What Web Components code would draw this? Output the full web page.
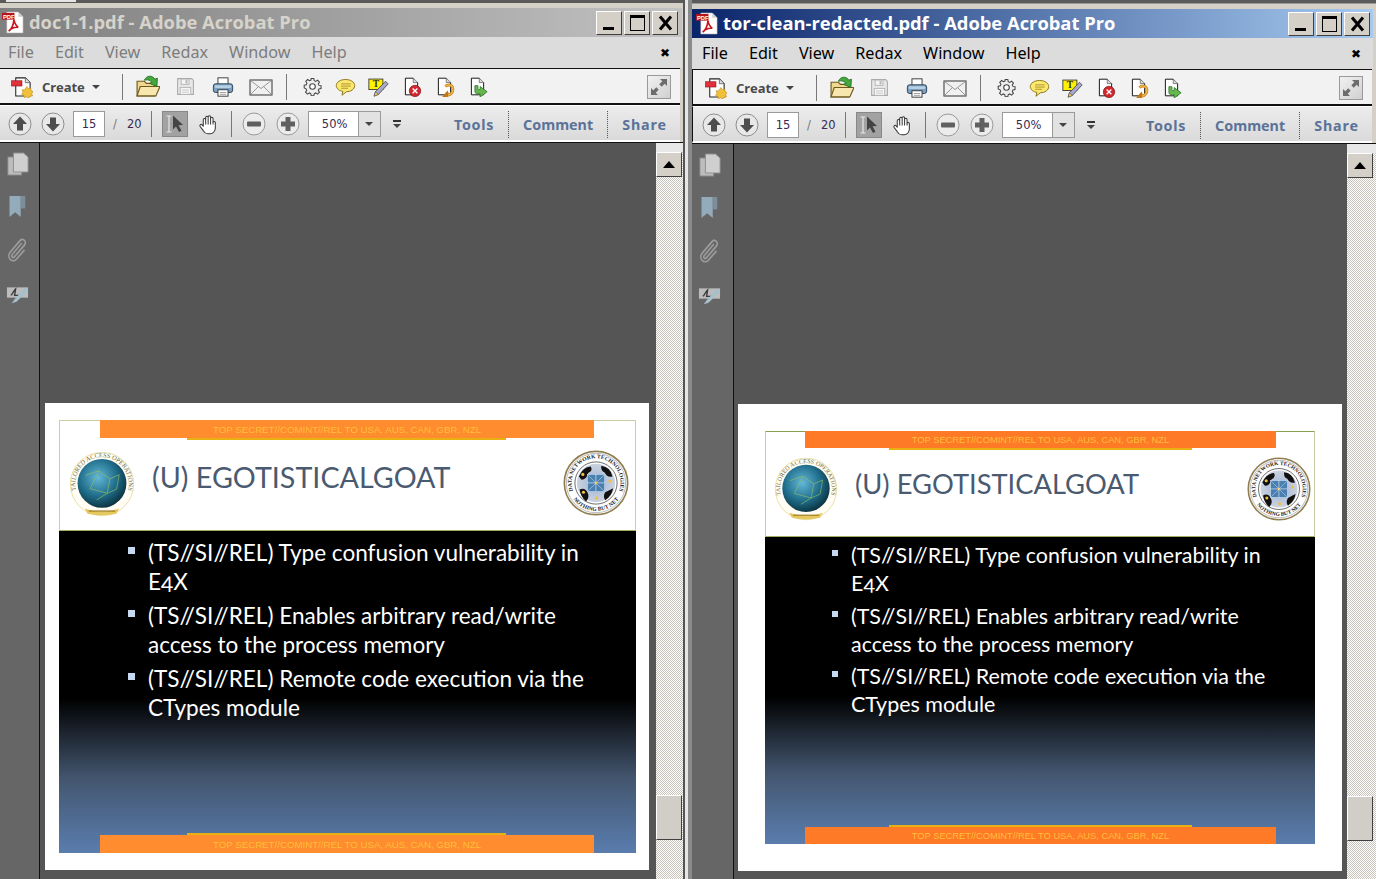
<!DOCTYPE html>
<html><head><meta charset="utf-8"><title>Acrobat</title>
<style>
html,body{margin:0;padding:0;background:#9a9a9a;overflow:hidden}
body{width:1376px;height:879px;position:relative;font-family:"Noto Sans",sans-serif}
acro-window.a{position:absolute;left:0;top:3px;width:683px;height:876px;--tail:1px;--tool:3px;--side:39px;--sbw:27px;--pad:5px;--menu:#7d7d7d;--t1:#7f7f7f;--t2:#c2c2c2;--tc:#d6d3cb;--tp:0px;--tbl:0px;--wr:4px}
acro-window.b{position:absolute;left:692px;top:4px;width:684px;height:875px;--tail:3px;--tool:4px;--side:41px;--sbw:29px;--pad:5px;--menu:#000;--t1:#0a246a;--t2:#a6caf0;--tc:#fff;--tp:2px;--tbl:1px;--wr:3px}
.gap{position:absolute;left:683px;top:0;width:9px;height:879px;background:linear-gradient(90deg,#555 0 2px,#e6e6e6 2px 5px,#8a8a8a 5px)}
.strip{position:absolute;left:0;top:0;width:1376px;height:3px;background:#5a5a5a}
.strip i{position:absolute;left:6px;top:0;width:70px;height:2px;background:#e4e4e4}
</style></head><body>
<div class="strip"><i></i></div>
<div class="gap"></div>

<acro-window class="a" name="doc1-1.pdf - Adobe Acrobat Pro">
  <slide-page style="--pl:14px;--pt:17px;--ml:5px;--mt:260px;--w:577px;--h:433px;--hh:111px;--barl:41px;--barw:494px;--barh:18px;--yl:128px;--yw:319px;--org:#ff8c2e;--tfs:28.700px;--tml:17px;--tb:14px;--fs:22.550px;--lh:29px;--ig:5px;--bt:7px;--bl:69px;--bw:7px;--bg:13px;--bp:0 12px 0 0;--seal:66px;--sl:9px;--sr:6px;--dm:-3px;--rowt:11px;--stfs:9.7px;--border:#c6cfa6" title-text="(U) EGOTISTICALGOAT">
    <slide-bullet>(TS//SI//REL) Type confusion vulnerability in E4X</slide-bullet>
    <slide-bullet>(TS//SI//REL) Enables arbitrary read/write access to the process memory</slide-bullet>
    <slide-bullet>(TS//SI//REL) Remote code execution via the CTypes module</slide-bullet>
  </slide-page>
</acro-window>

<acro-window class="b" name="tor-clean-redacted.pdf - Adobe Acrobat Pro">
  <slide-page style="--pl:27px;--pt:27px;--ml:4px;--mt:260px;--w:550px;--h:413px;--hh:106px;--barl:40px;--barw:471px;--barh:17px;--yl:124px;--yw:303px;--org:#ff7a26;--tfs:27.300px;--tml:17px;--tb:12px;--fs:21.450px;--lh:28px;--ig:4.5px;--bt:4px;--bl:67px;--bw:6px;--bg:13px;--bp:0 30px 0 0;--seal:64px;--sl:8px;--sr:3px;--dm:0px;--rowt:7px;--stfs:9.3px;--border:#8aa050" title-text="(U) EGOTISTICALGOAT">
    <slide-bullet>(TS//SI//REL) Type confusion vulnerability in E4X</slide-bullet>
    <slide-bullet>(TS//SI//REL) Enables arbitrary read/write access to the process memory</slide-bullet>
    <slide-bullet>(TS//SI//REL) Remote code execution via the CTypes module</slide-bullet>
  </slide-page>
</acro-window>

<script>
const DOC='<path d="M5 2.5h9l5 5v14H5z" fill="#fff" stroke="#111" stroke-width="1.1"/><path d="M14 2.5v5h5" fill="#ddd" stroke="#555" stroke-width=".8"/>';
const ICONS={
create:'<path d="M6 3h10l5 5v14H6z" fill="#fff" stroke="#222" stroke-width="1.1"/><path d="M16 3v5h5" fill="#ddd" stroke="#555" stroke-width=".8"/><rect x="1.5" y="6" width="11" height="5.5" fill="#e0303a" stroke="#8a1018" stroke-width=".6"/><path d="M17.5 12l1.6 2.2 2.6-.7.2 2.7 2.4 1.1-1.7 2 1 2.5-2.7.3-1.3 2.2-2.2-1.5-2.4 1-.5-2.6-2.5-1 1.5-2.2-.9-2.5 2.7-.2z" fill="#f2c038" stroke="#b07a10" stroke-width=".5"/>',
open:'<path d="M2 21V7h7l2 2h8v12z" fill="#f0d890" stroke="#6e5a1e" stroke-width="1.1"/><path d="M2 21l3-9h19l-4 9z" fill="#f7e6ae" stroke="#6e5a1e" stroke-width="1.1"/><path d="M9 6c2-5 8-5 10-1l2.5-1-.5 8-7-3 2.3-1C15 6 12 5 9 6z" fill="#44a83c" stroke="#1e6a1c" stroke-width=".8"/>',
save:'<path d="M3 3h16l2 2v16H3z" fill="#e8e8e8" stroke="#a8a8a8" stroke-width="1.2"/><rect x="7" y="3.5" width="9" height="6" fill="#f4f4f4" stroke="#b0b0b0"/><rect x="12" y="4.5" width="2.4" height="4" fill="#bbb"/><rect x="6" y="13" width="12" height="8" fill="#f6f6f6" stroke="#b0b0b0"/><path d="M8 16h8M8 18.500h8" stroke="#c4c4c4"/>',
print:'<rect x="6.500" y="2" width="11" height="8" fill="#fff" stroke="#333"/><rect x="1.500" y="8.500" width="21" height="9.500" rx="2.500" fill="#7aa0c4" stroke="#2a3d50"/><rect x="3" y="10" width="18" height="3" rx="1" fill="#b6d0e4"/><rect x="6.500" y="15" width="11" height="7" fill="#fff" stroke="#333"/><path d="M8.500 18h7M8.500 20h7" stroke="#999"/>',
mail:'<rect x="1" y="5" width="22" height="15" fill="#f0f0f0" stroke="#444" stroke-width="1.1"/><path d="M1.500 5.500l10.500 8 10.500-8M1.500 19.500l8-8M22.500 19.500l-8-8" fill="none" stroke="#999"/>',
gear:'<path d="M10.300 2h3.400l.5 2.700 1.900.8 2.300-1.500 2.400 2.400-1.500 2.300.8 1.900 2.700.5v3.400l-2.700.5-.8 1.900 1.500 2.300-2.400 2.400-2.300-1.500-1.900.8-.5 2.700h-3.400l-.5-2.700-1.900-.8-2.300 1.500-2.400-2.400 1.500-2.300-.8-1.900L1.500 13.700v-3.400l2.700-.5.8-1.900-1.500-2.300 2.400-2.400 2.300 1.500 1.900-.8z" fill="#eee" stroke="#444" stroke-width="1.300"/><circle cx="12" cy="12" r="3.500" fill="#fff" stroke="#444" stroke-width="1.400"/>',
comment:'<path d="M12 4c6 0 10.500 3 10.500 7S18 18 13 18l-5 4 1-4.500C5 17 1.500 14.500 1.500 11 1.500 7 6 4 12 4z" fill="#fbe870" stroke="#8a7418" stroke-width="1.100"/><path d="M7 9h11M7 11.500h11M7 14h8" stroke="#a88c20"/>',
sign:'<rect x="1" y="3.500" width="16" height="12" fill="#fff200" stroke="#333"/><text x="9" y="13" font-family="Liberation Serif,serif" font-size="11" font-weight="700" text-anchor="middle" fill="#333">T</text><path d="M20 6l3 3-11 12-5 2 1.500-5z" fill="#a8a8c8" stroke="#444" stroke-width=".9"/><path d="M8.500 18l3.500 3-5 2z" fill="#f0d070" stroke="#444" stroke-width=".6"/>',
docx:DOC+'<circle cx="16" cy="17" r="6.500" fill="#d0282e" stroke="#801218" stroke-width=".8"/><path d="M13.300 14.300l5.400 5.400M18.700 14.300l-5.400 5.400" stroke="#fff" stroke-width="1.500"/>',
docarrow:DOC+'<path d="M13 12c3-3 8-2 8.500 2.500.4 3.500-2 6.500-5.500 7.500l-1-2.500-3 3.500 3.500 1.500" fill="none" stroke="#c07818" stroke-width="3.200"/><path d="M13 12c3-3 8-2 8.500 2.500.4 3.500-2 6.500-5.500 7.500" fill="none" stroke="#f4b848" stroke-width="1.700"/>',
docgreen:DOC+'<path d="M9 11v6c0 2 1 3.500 3 3.500h3V24l8-6-8-6v3.500h-1.500c-.8 0-1-.5-1-1V11z" fill="#66b84e" stroke="#2e7428" stroke-width=".9"/>',
expand:'<rect x=".5" y=".5" width="23" height="23" fill="url(#exg)" stroke="#9a9a9a"/><defs><linearGradient id="exg" x1="0" y1="0" x2="1" y2="1"><stop offset="0" stop-color="#f2f2f2"/><stop offset="1" stop-color="#cfcfcf"/></linearGradient></defs><path d="M13 4h7v7l-2.300-2.300-3 3-2.400-2.400 3-3zM11 20H4v-7l2.300 2.300 3-3 2.400 2.400-3 3z" fill="#6d6d6d"/>',
up:'<circle cx="12" cy="12" r="11" fill="#e8e8e8" stroke="#8e8e8e"/><path d="M12 4.500l7 7.500h-4v6.500H9V12H5z" fill="#4d4d4d"/>',
down:'<circle cx="12" cy="12" r="11" fill="#e8e8e8" stroke="#8e8e8e"/><path d="M12 19.500L5 12h4V5.500h6V12h4z" fill="#4d4d4d"/>',
minus:'<circle cx="12" cy="12" r="11" fill="#ececec" stroke="#9a9a9a"/><rect x="5" y="9.500" width="14" height="5" rx="1" fill="#606060"/>',
plus:'<circle cx="12" cy="12" r="11" fill="#ececec" stroke="#9a9a9a"/><path d="M9.500 5h5v4.500H19v5h-4.500V19h-5v-4.500H5v-5h4.500z" fill="#606060"/>',
select:'<rect x=".5" y=".5" width="25" height="25" fill="#a2a2a2" stroke="#888"/><path d="M4.500 5h5M4.500 21h5M7 5v16" stroke="#e8e8e8" stroke-width="1.200" fill="none"/><path d="M11 4.500l10 9.500-4.500.3 3 5.500-2.500 1.300-3-5.600-3 3z" fill="#444"/>',
hand:'<path d="M6 12V6.500a1.400 1.400 0 012.800 0V4a1.400 1.400 0 012.800 0v-.5a1.400 1.400 0 012.800 0V5a1.400 1.400 0 012.800 0v5a1.300 1.300 0 012.600 0v6c0 3.500-2.500 6.500-6 6.500h-2.500c-2.500 0-4-1.200-5.300-3.500L2.300 14c-.8-1.600 1.300-3 2.400-1.600L6 14zM8.800 6.500V12M11.600 4v8M14.400 4v8M17.200 5v7" fill="#fff" stroke="#333" stroke-width="1.150" stroke-linejoin="round"/>',
pages:'<rect x="1" y="5" width="15" height="18" fill="#bdbdbd" stroke="#8a8a8a"/><path d="M7 1h11l5 4v15H7z" fill="#cfcfcf" stroke="#8e8e8e"/>',
bookmark:'<path d="M2 1h15v22l-7.500-5L2 23z" fill="#93abba"/><path d="M17 1h6v13h-6z" fill="#7c8e99"/>',
clip:'<path d="M17 5L6 16.500c-1.600 1.800.6 4 2.400 2.400L20 7c3-3.200-1.800-7.500-5-4.500L3.500 14.300c-4.500 5 2.500 11.500 7.300 6.800L20 12" fill="none" stroke="#9c9c9c" stroke-width="1.800"/>',
signp:'<rect x="1" y="3" width="22" height="13" fill="#bcbcbc"/><path d="M5 13c2-1 3-6 5-8l-1 8h6" fill="none" stroke="#3c3c3c" stroke-width="1.500"/><path d="M20 3L9 18l-3 5 5-2L23 7z" fill="#a6bfcd"/>',
pdf:'<path d="M5 1h12l5 5v17H5z" fill="#fff" stroke="#aaa" stroke-width=".6"/><path d="M17 1v5h5" fill="#ccc"/><path d="M7 21c3-2 5-7 5.500-12 .3 3 2.500 7 4.500 8-4-.5-7 .5-10 4z" fill="none" stroke="#c8141c" stroke-width="1.700"/><rect x="0" y="2" width="13" height="7" fill="#b4141c"/><text x="1" y="8" font-family="Liberation Sans,sans-serif" font-size="6" font-weight="700" fill="#fff">PDF</text>'
};
function shadow(el,html){el.attachShadow({mode:'open'}).innerHTML=html;return el.shadowRoot;}

customElements.define('acro-icon',class extends HTMLElement{
  connectedCallback(){
    const s=this.getAttribute('size')||24, h=this.getAttribute('h')||s, n=this.getAttribute('name');
    const vb=(n==='select')?'0 0 26 26':'0 0 24 24';
    shadow(this,`<style>:host{display:block;flex:none;width:${s}px;height:${h}px}svg{display:block;width:100%;height:100%}</style><svg viewBox="${vb}" preserveAspectRatio="none">${ICONS[n]}</svg>`);
  }
});

customElements.define('win-btn',class extends HTMLElement{
  connectedCallback(){
    const k=this.getAttribute('kind');
    const g={min:'<rect x="6" y="15" width="11" height="3" fill="#000"/>',max:'<rect x="5.500" y="3.500" width="14" height="15" fill="none" stroke="#000" stroke-width="1"/><rect x="5" y="3" width="15" height="3" fill="#000"/>',close:'<path d="M7 4.500l11 13M18 4.500l-11 13" stroke="#000" stroke-width="3"/>'}[k];
    shadow(this,`<style>:host{display:block;flex:none;width:26px;height:24px;box-sizing:border-box;background:#d4d0c8;border:1px solid;border-color:#fff #404040 #404040 #fff}svg{display:block;width:24px;height:22px}</style><svg viewBox="0 0 24 22">${g}</svg>`);
  }
});

customElements.define('acro-menu',class extends HTMLElement{
  connectedCallback(){
    shadow(this,`<style>:host{display:flex;align-items:center;height:31px;padding-left:calc(8px + var(--tp));background:#dcdcdc;font:16.200px/31px "Noto Sans",sans-serif;color:var(--menu);gap:21px;position:relative}
    b{margin-left:auto;margin-right:12px;font:700 12px "DejaVu Sans",sans-serif;color:#000}</style>
    <span>File</span><span>Edit</span><span>View</span><span>Redax</span><span>Window</span><span>Help</span><b>✖</b>`);
  }
});

customElements.define('acro-toolbar',class extends HTMLElement{
  connectedCallback(){
    shadow(this,`<style>:host{display:flex;align-items:center;height:37px;box-sizing:border-box;margin-right:var(--tool);background:#f2f2f2;border-top:1px solid #111;border-bottom:2px solid #111;border-left:var(--tbl) solid #111;padding-top:1px;padding-left:calc(10px + var(--tp) - var(--tbl))}
    .c{font:700 13px "Noto Sans",sans-serif;color:#4a4a4a;margin-left:9px;width:44px}
    .car{width:0;height:0;border:4px solid transparent;border-top-color:#444;border-bottom:0;margin-left:6px}
    .sep{width:1px;height:26px;background:#777;flex:none}
    .ex{margin-left:auto;margin-right:9px}</style>
    <acro-icon name="create" size="23"></acro-icon><span class="c">Create</span><i class="car"></i>
    <i class="sep" style="margin-left:22px"></i>
    <acro-icon name="open" size="25" style="margin-left:12px"></acro-icon>
    <acro-icon name="save" size="21" style="margin-left:15px"></acro-icon>
    <acro-icon name="print" size="22" style="margin-left:16px"></acro-icon>
    <acro-icon name="mail" size="24" style="margin-left:15px"></acro-icon>
    <i class="sep" style="margin-left:13px"></i>
    <acro-icon name="gear" size="19" style="margin-left:16px"></acro-icon>
    <acro-icon name="comment" size="21" style="margin-left:13px"></acro-icon>
    <acro-icon name="sign" size="21" style="margin-left:12px"></acro-icon>
    <acro-icon name="docx" size="21" style="margin-left:12px"></acro-icon>
    <acro-icon name="docarrow" size="21" style="margin-left:12px"></acro-icon>
    <acro-icon name="docgreen" size="21" style="margin-left:12px"></acro-icon>
    <acro-icon class="ex" name="expand" size="24"></acro-icon>`);
  }
});

customElements.define('acro-nav',class extends HTMLElement{
  connectedCallback(){
    shadow(this,`<style>:host{display:flex;align-items:center;height:37px;box-sizing:border-box;margin-right:var(--tool);background:linear-gradient(#ececec,#dadada);border-top:1px solid #fff;border-bottom:2px solid #fff;border-left:var(--tbl) solid #111;box-shadow:0 1px 0 #222;padding-top:2px;padding-left:calc(8px + var(--tp) - var(--tbl));font:11.500px "DejaVu Sans",sans-serif;color:#3a2a50}
    .inp{box-sizing:border-box;height:26px;background:#fff;border:1px solid #9a9a9a;display:flex;align-items:center;flex:none}
    .sep{width:1px;height:26px;background:#777;flex:none}
    .zoom{width:73px;margin-left:8px}
    .zoom span{flex:1;text-align:center;padding-left:3px}
    .dd{width:21px;height:24px;border-left:1px solid #9a9a9a;background:#e2e2e2;display:flex;align-items:center;justify-content:center}
    .tri{width:0;height:0;border:4px solid transparent;border-top-color:#444;border-bottom:0}
    .ov{margin-left:12px;display:flex;flex-direction:column;align-items:center;gap:2px}
    .ov u{display:block;width:8px;height:2px;background:#333}
    .tabs{margin-left:auto;display:flex;height:27px;font:700 14.300px/27px "Noto Sans",sans-serif;color:#5b7398;margin-right:13px}
    .tabs span+span{border-left:1px dotted #555;margin-left:14px;padding-left:14px}
    </style>
    <acro-icon name="up" size="24"></acro-icon>
    <acro-icon name="down" size="24" style="margin-left:9px"></acro-icon>
    <div class="inp" style="width:32px;margin-left:8px;justify-content:center">15</div>
    <span style="margin-left:8px;color:#777;width:14px">/</span>
    <span style="margin-left:0">20</span>
    <i class="sep" style="margin-left:9px"></i>
    <acro-icon name="select" size="26" style="margin-left:10px"></acro-icon>
    <acro-icon name="hand" size="21" style="margin-left:10px"></acro-icon>
    <i class="sep" style="margin-left:12px"></i>
    <acro-icon name="minus" size="24" style="margin-left:10px"></acro-icon>
    <acro-icon name="plus" size="24" style="margin-left:10px"></acro-icon>
    <div class="inp zoom"><span>50%</span><div class="dd"><i class="tri"></i></div></div>
    <div class="ov"><u></u><i class="tri"></i></div>
    <div class="tabs"><span style="letter-spacing:.7px">Tools</span><span>Comment</span><span style="letter-spacing:.9px">Share</span></div>`);
  }
});

customElements.define('acro-sidebar',class extends HTMLElement{
  connectedCallback(){
    shadow(this,`<style>:host{display:flex;flex-direction:column;flex:none;box-sizing:content-box;width:var(--side);background:#666;border-right:1px solid #111;padding-top:9px}
    acro-icon{margin-left:7px}</style>
    <acro-icon name="pages" size="22" h="24"></acro-icon>
    <acro-icon name="bookmark" size="18" h="23" style="margin-top:19px;margin-left:8px"></acro-icon>
    <acro-icon name="clip" size="21" h="24" style="margin-top:20px"></acro-icon>
    <acro-icon name="signp" size="23" h="19" style="margin-top:23px;margin-left:6px"></acro-icon>`);
  }
});

customElements.define('acro-scroll',class extends HTMLElement{
  connectedCallback(){
    shadow(this,`<style>:host{display:flex;flex-direction:column;flex:none;width:var(--sbw);background:repeating-conic-gradient(#c8c4bc 0 25%,#fff 0 50%) 0 0/2px 2px}
    .top{height:9px;background:#e8e8e8}
    .btn{box-sizing:border-box;width:26px;height:25px;background:#d4d0c8;border:1px solid;border-color:#fff #404040 #404040 #fff;display:flex;align-items:center;justify-content:center}
    .btn i{width:0;height:0;border:6px solid transparent;border-top:0;border-bottom:7px solid #000}
    .th{box-sizing:border-box;width:26px;height:45px;margin-top:var(--thumb,618px);background:#d0cec6;border:1px solid;border-color:#fff #404040 #404040 #fff}</style>
    <div class="top"></div><div class="btn"><i></i></div><div class="th"></div>`);
  }
});

customElements.define('acro-window',class extends HTMLElement{
  connectedCallback(){
    shadow(this,`<style>:host{display:flex;flex-direction:column;background:#d4d0c8;padding-top:var(--pad);box-sizing:border-box}
    .tw{margin-right:var(--tail)}
    .title{display:flex;align-items:center;height:29px;background:linear-gradient(90deg,var(--t1),var(--t2));padding:0 var(--wr) 0 calc(2px + var(--tp));color:var(--tc);font:700 18.350px/27px "Open Sans",sans-serif}
    .title span{margin-left:4px;margin-bottom:2px;flex:1;white-space:nowrap}
    .btns{display:flex;gap:2px}
    .main{flex:1;display:flex;min-height:0;border-top:1px solid #111}
    .view{flex:1;background:#555;overflow:hidden;min-width:0}</style>
    <div class="tw"><div class="title"><acro-icon name="pdf" size="23"></acro-icon><span>${this.getAttribute('name')}</span><div class="btns"><win-btn kind="min"></win-btn><win-btn kind="max"></win-btn><win-btn kind="close"></win-btn></div></div>
    <acro-menu></acro-menu></div>
    <acro-toolbar></acro-toolbar><acro-nav></acro-nav>
    <div class="main"><acro-sidebar></acro-sidebar><div class="view"><slot></slot></div><acro-scroll></acro-scroll></div>`);
  }
});

customElements.define('tao-seal',class extends HTMLElement{
  connectedCallback(){
    shadow(this,`<style>:host{display:block;flex:none;width:var(--seal);height:var(--seal)}svg{display:block;width:100%;height:100%}</style>
    <svg viewBox="-50 -50 100 100"><defs><radialGradient id="g" cx=".42" cy=".38" r=".7"><stop offset="0" stop-color="#63b8d8"/><stop offset=".55" stop-color="#1f6d8a"/><stop offset="1" stop-color="#07252f"/></radialGradient>
    <path id="tp" d="M-26 31A40.500 40.500 0 1 1 26 31"/></defs>
    <circle r="48" fill="#fffdf4" stroke="#eadfa8" stroke-width="1.500"/>
    <text font-family="Liberation Serif,serif" font-size="9.600" fill="#6e6a3a"><textPath href="#tp" startOffset="50%" text-anchor="middle">TAILORED ACCESS OPERATIONS</textPath></text>
    <circle cy="-1" r="37" fill="url(#g)"/>
    <path d="M-25-13L-5-20 12-8 26-14M-18 7L-5-20M-18 7L8 14 12-8M8 14L22 8 26-14M-8 24L8 14" fill="none" stroke="#8fbf60" stroke-width="1"/>
    <path d="M-26 37q26 10 52 0l-4 8q-22 5-44 0z" fill="#e6c860"/><rect x="-20" y="40" width="40" height="2" fill="#a5822a"/></svg>`);
  }
});
customElements.define('dnt-seal',class extends HTMLElement{
  connectedCallback(){
    shadow(this,`<style>:host{display:block;flex:none;width:var(--seal);height:var(--seal);margin-top:var(--dm)}svg{display:block;width:100%;height:100%}</style>
    <svg viewBox="-50 -50 100 100"><defs><radialGradient id="m" cx=".5" cy=".5" r=".6"><stop offset="0" stop-color="#9db4d8"/><stop offset="1" stop-color="#d4d8e0"/></radialGradient>
    <path id="t1" d="M-34 14A37 37 0 1 1 34 14"/><path id="t2" d="M-40 14A42.500 42.500 0 0 0 40 14"/></defs>
    <circle r="48" fill="#fff" stroke="#8f7f50" stroke-width="2.500"/><circle r="45" fill="none" stroke="#555" stroke-width=".6"/>
    <text font-family="Liberation Serif,serif" font-size="8.500" font-weight="700" fill="#222"><textPath href="#t1" startOffset="50%" text-anchor="middle">DATA NETWORK TECHNOLOGIES</textPath></text>
    <text font-family="Liberation Serif,serif" font-size="8.500" font-weight="700" fill="#222"><textPath href="#t2" startOffset="50%" text-anchor="middle">NOTHING BUT NET</textPath></text>
    <circle r="32" fill="#fff" stroke="#444" stroke-width="1.200"/><circle r="29" fill="url(#m)"/>
    <path d="M-26-10q6-14 18-15 4 6-4 10-2 10-10 10zM8-26q14 2 17 16-8 2-12-6-6-2-5-10zM-25 10q8-4 12 4 4 8-2 14-8-6-10-18zM14 14q8-4 12-6-2 12-12 18-4-6 0-12z" fill="#111"/>
    <g stroke="#cfe0f4" stroke-width=".8" fill="#4a80b0"><rect x="-13" y="-13" width="13" height="13"/><rect x="0" y="-13" width="13" height="13"/><rect x="-13" y="0" width="13" height="13"/><rect x="0" y="0" width="13" height="13"/><path d="M-13-13L13 13M13-13L-13 13" fill="none"/></g>
    <circle r="2" fill="#fc6"/><circle cx="-20" cy="-13" r="2.400" fill="#f0c040"/><circle cx="21" cy="-3" r="2.400" fill="#f0c040"/><circle cx="-19" cy="14" r="2.400" fill="#f0c040"/><circle cx="1" cy="23" r="2.400" fill="#f0c040"/></svg>`);
  }
});

customElements.define('slide-bullet',class extends HTMLElement{
  connectedCallback(){
    shadow(this,`<style>:host{display:flex;color:#fff;font:var(--fs)/var(--lh) Lato,sans-serif;font-feature-settings:"onum";padding:var(--bp);margin-left:var(--bl)}
    i{flex:none;width:var(--bw);height:var(--bw);background:#c6d9f1;margin-top:calc((var(--lh) - var(--bw))/2 - 2px);margin-right:var(--bg)}
    div{min-width:0}</style><i></i><div><slot></slot></div>`);
  }
});

customElements.define('slide-page',class extends HTMLElement{
  connectedCallback(){
    const cls='TOP SECRET//COMINT//REL TO USA, AUS, CAN, GBR, NZL';
    shadow(this,`<style>:host{display:block;box-sizing:border-box;width:604px;height:467px;background:#fff;margin:var(--mt) 0 0 var(--ml);padding:var(--pt) 0 0 var(--pl)}
    .s{width:var(--w);height:var(--h);display:flex;flex-direction:column}
    .h{height:var(--hh);box-sizing:border-box;flex:none;background:#fff;border:1px solid var(--border);border-right-color:#c6cfa6;border-left-color:#c6cfa6;border-bottom-color:#a0b060}
    .bar{margin-left:calc(var(--barl) - 1px);width:var(--barw);height:var(--barh);background:var(--org);text-align:center;font:var(--stfs)/calc(var(--barh) + 2px) "Liberation Sans",sans-serif;color:#ffbe3a;white-space:nowrap;margin-top:-1px;overflow:hidden}
    .y{height:2px;width:var(--yw);margin-left:calc(var(--yl) - 1px);background:#e8b010}
    .row{display:flex;align-items:center;margin-top:var(--rowt);padding:0 var(--sr) 0 var(--sl)}
    .t{flex:1;margin-left:var(--tml);margin-bottom:var(--tb);font:var(--tfs) Lato,sans-serif;color:#4a5a70;white-space:nowrap}
    .b{flex:1;display:flex;flex-direction:column;gap:var(--ig);padding-top:var(--bt);background:linear-gradient(#000 52%,#43566f 77%,#5a7dae);min-height:0}
    .foot{margin-top:auto}
    .foot .bar{margin-top:0;margin-left:var(--barl)}
    .foot .y{margin-left:var(--yl)}</style>
    <div class="s"><div class="h"><div class="bar">${cls}</div><div class="y"></div>
      <div class="row"><tao-seal></tao-seal><div class="t">${this.getAttribute('title-text')}</div><dnt-seal></dnt-seal></div></div>
      <div class="b"><slot></slot><div class="foot"><div class="y"></div><div class="bar">${cls}</div></div></div></div>`);
  }
});
</script>
</body></html>
